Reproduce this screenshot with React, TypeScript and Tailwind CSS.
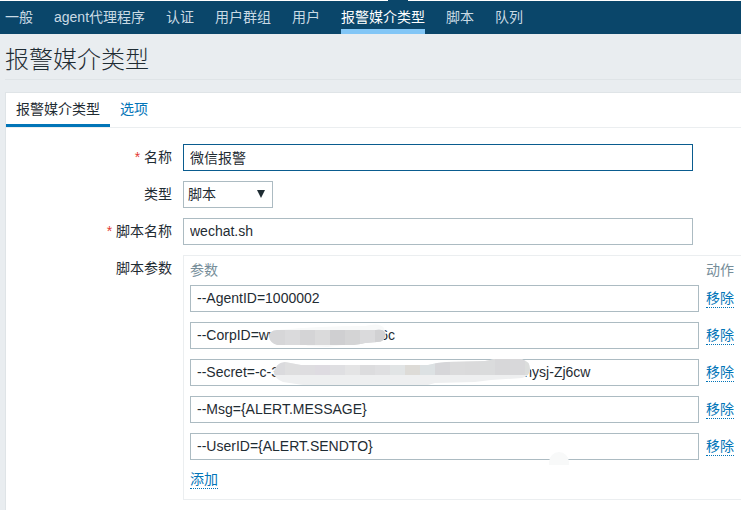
import { useState } from "react";

const navItems = ["一般", "agent代理程序", "认证", "用户群组", "用户", "报警媒介类型", "脚本", "队列"];

const initialParams = [
  "--AgentID=1000002",
  "--CorpID=ww000000000000  6c",
  "--Secret=-c-3000000000000000000000000000000   nysj-Zj6cw",
  "--Msg={ALERT.MESSAGE}",
  "--UserID={ALERT.SENDTO}",
];

const field = "block h-[27px] border bg-white px-1.5 pb-0.5 outline-none";
const link = "block border-b border-dotted border-[#0275b8] leading-[18px] text-[#0275b8]";

function CorpMask() {
  return (
    <svg className="pointer-events-none absolute left-[78px] top-0" width="120" height="27" aria-hidden="true">
      <defs>
        <clipPath id="corp">
          <path d="M1 15C1 11 4 8 9 8L108 8Q116 7 117 11Q118 20 109 20L97 21Q88 23 82 23L9 23Q2 21 1 15Z" />
        </clipPath>
      </defs>
      <path d="M10 8Q50 4 97 4Q112 0 116 6L118 12L112 18L60 25L40 24Z" fill="#f8f9f9" />
      <g clipPath="url(#corp)">
        <rect width="120" height="27" fill="#d6d6d8" />
        <rect x="17" width="15" height="27" fill="#dadadc" />
        <rect x="32" width="15" height="27" fill="#d4d4d6" />
        <rect x="47" width="15" height="27" fill="#dadadb" />
        <rect x="62" width="15" height="27" fill="#cfcfd1" />
        <rect x="77" width="15" height="27" fill="#d4d4d5" />
        <rect x="92" width="15" height="27" fill="#dadadc" />
        <rect x="107" width="13" height="27" fill="#d1d1d3" />
      </g>
    </svg>
  );
}

const tones = ["#dadadd", "#dededf", "#dedde0", "#dedbe1", "#dfdfe2", "#e4e4e5", "#dcdcde", "#dfdfe1", "#e1e4e5", "#dddbd7", "#dce1e3", "#d6d6d9", "#dbdbdc", "#dadadb", "#dadbdc", "#d7d7d9", "#d8d8da", "#dbdddc"];

function SecretMask() {
  return (
    <svg className="pointer-events-none absolute left-[83px] top-0" width="260" height="27" aria-hidden="true">
      <defs>
        <clipPath id="secret">
          <path d="M1 14Q2 4 12 3L28 6L155 6L164 4L173 3L212 2L222 0H248Q257 2 257 10Q257 17 249 19L218 21L202 23L162 24L155 26L30 26L10 23Q2 20 1 14Z" />
        </clipPath>
      </defs>
      <g clipPath="url(#secret)">
        <rect width="260" height="27" fill="#eeeff0" />
        {tones.map((tone, i) => (
          <rect key={i} x={i * 15 - 3} width="15" height="16" fill={tone} />
        ))}
      </g>
    </svg>
  );
}

export default function App() {
  const [name, setName] = useState("微信报警");
  const [script, setScript] = useState("wechat.sh");
  const [params, setParams] = useState(initialParams);

  return (
    <div className="flex min-h-screen flex-col overflow-x-hidden bg-[#e9edf0] font-['Liberation_Sans','Noto_Sans_CJK_SC',sans-serif] text-[14px] text-[#1f2c33]">
      <header className="relative border-t border-white bg-[#0a466a]">
        <span className="absolute -top-px left-[388px] h-px w-[20px] bg-[#0a466a]" />
        <nav className="flex h-[33px] gap-[21px] whitespace-nowrap pl-[5px]">
          {navItems.map((item) => (
            <a
              key={item}
              href="#"
              className={
                item === "报警媒介类型"
                  ? "border-b-5 border-[#82c6f6] leading-[33px] text-white"
                  : "leading-[33px] text-[#c9dae4]"
              }
            >
              {item}
            </a>
          ))}
        </nav>
      </header>

      <main className="flex flex-1 flex-col pl-[5px]">
        <h1 className="h-[46px] border-b border-[#dfe4e7] text-[24px] leading-[52px] font-light">报警媒介类型</h1>

        <section className="mt-3 flex-1 border-l border-t border-[#dfe4e7] bg-white">
          <div role="tablist" className="flex h-[35px] border-b border-[#ebeef0]">
            <button type="button" role="tab" aria-selected="true" className="-mb-px h-[34px] border-b-3 border-[#0275b8] px-[10px] pt-0.5">
              报警媒介类型
            </button>
            <button type="button" role="tab" aria-selected="false" className="h-[33px] px-[10px] text-[#0275b8]">
              选项
            </button>
          </div>

          <form className="grid grid-cols-[166px_minmax(0,1fr)] gap-x-[11px] gap-y-[10px] pt-4 pb-[10px]">
            <label htmlFor="name" className="text-right leading-[27px]">
              <span className="text-[#e33734]">*</span> 名称
            </label>
            <input id="name" value={name} onChange={(e) => setName(e.target.value)} className={`${field} w-full max-w-[510px] border-[#0a5c8f]`} />

            <label htmlFor="type" className="text-right leading-[27px]">类型</label>
            <div className="relative w-[90px]">
              <select id="type" className="block h-[27px] w-full appearance-none border border-[#acbbc2] bg-white px-1 outline-none">
                <option>脚本</option>
              </select>
              <svg className="pointer-events-none absolute right-2 top-[9px]" width="8" height="8" aria-hidden="true">
                <path d="M0 0H8L4 8Z" fill="#1f2c33" />
              </svg>
            </div>

            <label htmlFor="script" className="text-right leading-[27px]">
              <span className="text-[#e33734]">*</span> 脚本名称
            </label>
            <input id="script" value={script} onChange={(e) => setScript(e.target.value)} className={`${field} w-full max-w-[510px] border-[#acbbc2]`} />

            <div className="text-right leading-[27px]">脚本参数</div>
            <div className="border-y border-l border-[#ebeef0] pl-1.5 pt-[5px] pb-[10px]">
              <table className="w-full">
                <thead>
                  <tr className="h-[19px] text-left leading-[19px] text-[#768d99]">
                    <th className="w-[509px] p-0 font-normal">参数</th>
                    <th className="p-0 pl-[7px] font-normal">动作</th>
                  </tr>
                </thead>
                <tbody>
                  {params.map((value, i) => (
                    <tr key={i}>
                      <td className="p-0 py-[5px]">
                        <div className="relative">
                          <input
                            aria-label={`参数 ${i + 1}`}
                            value={value}
                            onChange={(e) => setParams(params.map((p, j) => (j === i ? e.target.value : p)))}
                            className={`${field} w-full border-[#acbbc2]`}
                          />
                          {i === 1 && <CorpMask />}
                          {i === 2 && <SecretMask />}
                          {i === 4 && <span className="absolute left-[359px] top-[19px] h-[13px] w-[20px] rounded-t-full bg-[#f8f9f9]" />}
                        </div>
                      </td>
                      <td className="p-0 pl-[7px]">
                        <button type="button" className={link}>移除</button>
                      </td>
                    </tr>
                  ))}
                </tbody>
              </table>
              <button type="button" className={`${link} mt-[5px]`}>添加</button>
            </div>
          </form>
        </section>
      </main>
    </div>
  );
}
